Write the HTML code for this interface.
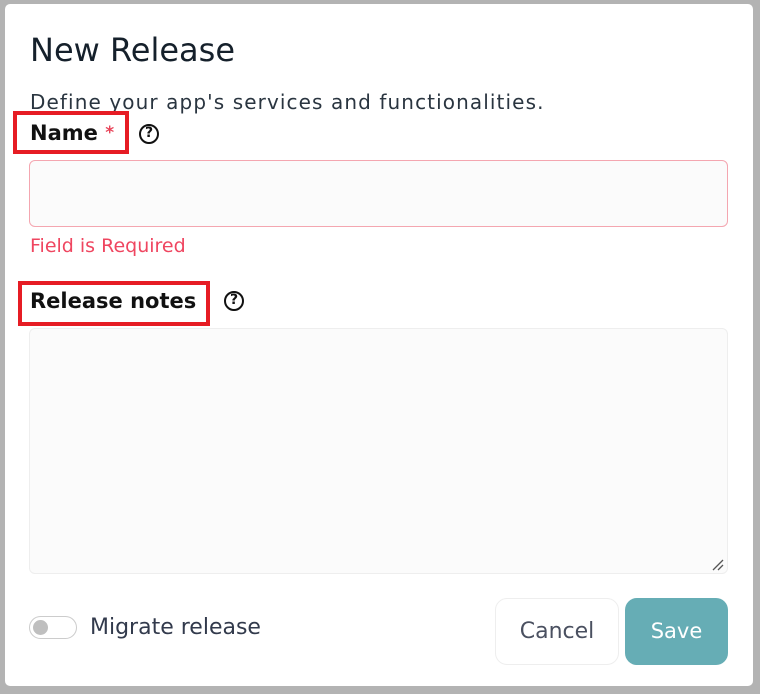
<!DOCTYPE html>
<html><head><style>
body{margin:0;width:760px;height:694px;background:#b3b3b3;position:relative;overflow:hidden;font-family:"DejaVu Sans","Liberation Sans",sans-serif;}
.m{position:absolute;left:5px;top:4px;width:748px;height:682px;background:#fff;border-radius:5px;}
.a{position:absolute;line-height:1;}
.t{left:30px;top:34px;font-size:32px;color:#15202b;}
.s{left:30px;top:92px;font-size:20px;letter-spacing:1.1px;color:#2a3540;}
.l{font-size:21px;font-weight:bold;color:#111;}
.rb{border:4px solid #e61c24;box-sizing:border-box;}
.q{width:20px;height:20px;border:2.5px solid #111;border-radius:50%;box-sizing:border-box;font-size:14px;font-weight:bold;text-align:center;line-height:15px;color:#111;}
</style></head><body>
<div class="m"></div>
<div class="a t">New Release</div>
<div class="a s">Define your app's services and functionalities.</div>
<div class="a rb" style="left:13px;top:111px;width:116px;height:43px"></div>
<div class="a l" style="left:30px;top:123px">Name <span style="color:#e8455a;font-size:17px;vertical-align:2px">*</span></div>
<div class="a q" style="left:139px;top:124px">?</div>
<div class="a" style="left:29px;top:160px;width:699px;height:67px;box-sizing:border-box;border:1px solid #f4a6b0;border-radius:6px;background:#fbfbfb"></div>
<div class="a" style="left:30px;top:237px;font-size:19px;color:#ef4660">Field is Required</div>
<div class="a rb" style="left:18px;top:281px;width:192px;height:45px"></div>
<div class="a l" style="left:30px;top:291px">Release notes</div>
<div class="a q" style="left:224px;top:291px">?</div>
<div class="a" style="left:29px;top:328px;width:699px;height:246px;box-sizing:border-box;border:1px solid #eee;border-radius:6px;background:#fbfbfb"></div>
<svg class="a" style="left:711px;top:558px" width="14" height="14"><path d="M2 12L12 2M7 12L12 7" stroke="#555" stroke-width="1.3"/></svg>
<div class="a" style="left:29px;top:616px;width:48px;height:23px;box-sizing:border-box;border:1px solid #ccc;border-radius:12px;background:#fff"></div>
<div class="a" style="left:33px;top:620px;width:15px;height:15px;border-radius:50%;background:#bfbfbf"></div>
<div class="a" style="left:90px;top:617px;font-size:22px;color:#323a4c">Migrate release</div>
<div class="a" style="left:495px;top:598px;width:124px;height:67px;box-sizing:border-box;border:1px solid #eee;border-radius:12px;background:#fff;text-align:center;line-height:65px;font-size:22px;color:#4a5060">Cancel</div>
<div class="a" style="left:625px;top:598px;width:103px;height:67px;border-radius:12px;background:#66adb5;text-align:center;line-height:67px;font-size:21px;color:#fff">Save</div>
</body></html>
